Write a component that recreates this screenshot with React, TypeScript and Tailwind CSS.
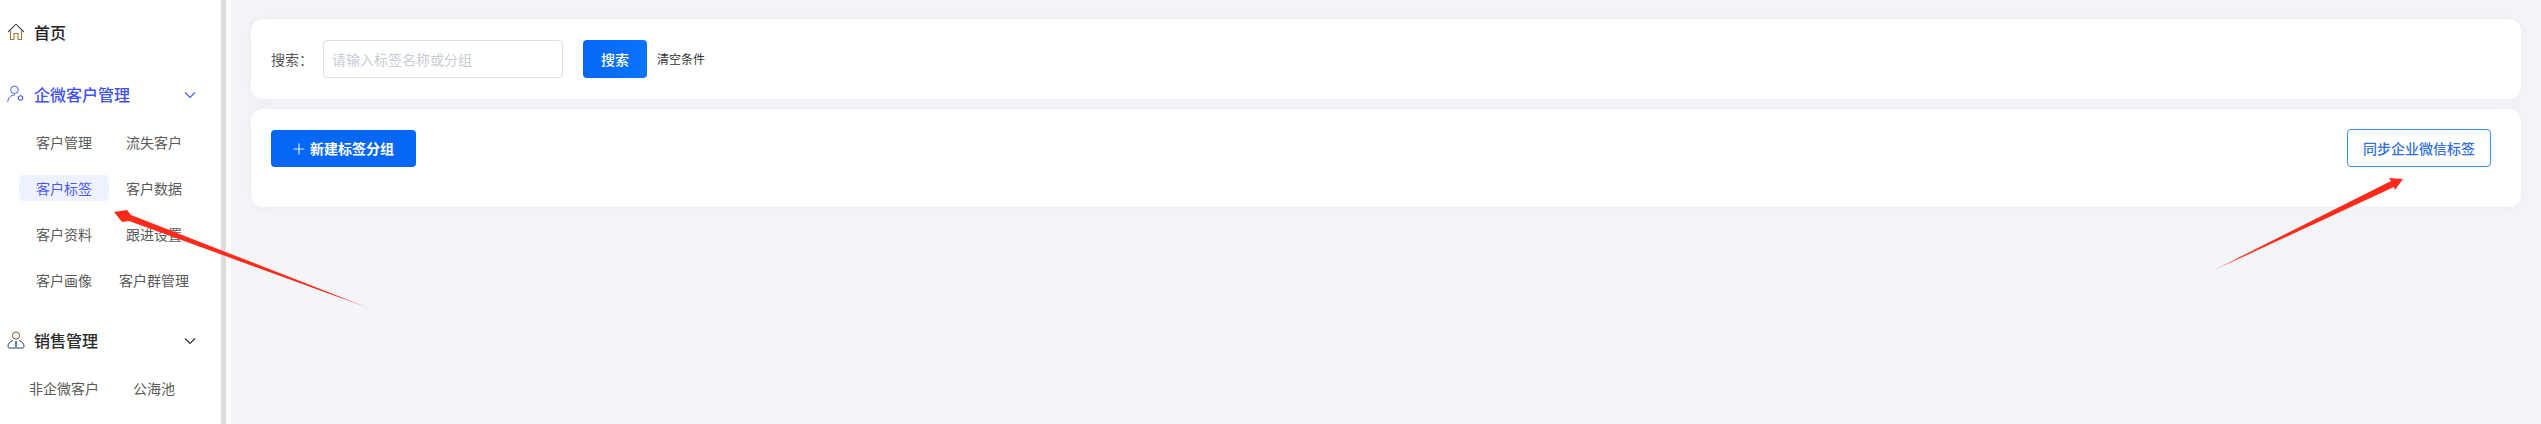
const font = { fontFamily: '"Noto Sans CJK SC", "Noto Sans", sans-serif' };

function HomeIcon() {
  return (
    <svg width="18" height="18" viewBox="0 0 18 18" fill="none" strokeWidth="1.1">
      <path d="M1 9 L9 1.2 L17 9" stroke="#3a4a66" />
      <path d="M3.5 7 V16.5 H7 V10.5 H11 V16.5 H14.5 V7" stroke="#a2773c" />
    </svg>
  );
}
function UserGearIcon() {
  return (
    <svg width="18" height="18" viewBox="0 0 18 18" fill="none" stroke="#4a5cf0" strokeWidth="1">
      <circle cx="7.5" cy="4.8" r="3.8" />
      <path d="M0.8 17 C1 12.5 3.8 10 8 10" />
      <path d="M13.5 10.6 L15.6 11.8 V14.2 L13.5 15.4 L11.4 14.2 V11.8 Z" strokeWidth="1.2" />
    </svg>
  );
}
function SalesIcon() {
  return (
    <svg width="18" height="18" viewBox="0 0 18 18" fill="none" stroke="#2c3a55" strokeWidth="1">
      <circle cx="9" cy="4.6" r="3.6" stroke="#7a5a3a" />
      <path d="M6 9.5 C2.5 10.5 1 13 1 15.2 C1 16.6 2 17 3 17 H15 C16 17 17 16.6 17 15.2 C17 13 15.5 10.5 12 9.5" />
      <path d="M9 10 L10 14 L9 16 L8 14 Z" stroke="#2a66b8" />
    </svg>
  );
}
function Chevron({ color }: { color: string }) {
  return (
    <svg width="12" height="8" viewBox="0 0 12 8" fill="none" stroke={color} strokeWidth="1.2">
      <path d="M1 1.5 L6 6.5 L11 1.5" />
    </svg>
  );
}

function SubGrid({ items, active }: { items: string[]; active?: string }) {
  return (
    <div className="grid grid-cols-[90px_90px] gap-y-[20px] pl-[19px]">
      {items.map((t) => (
        <div
          key={t}
          className={`flex h-[26px] items-center justify-center rounded-[4px] text-[14px] ${
            t === active ? "bg-[#eef1fe] text-[#4a5cf0]" : "text-[#5a5a5a]"
          }`}
        >
          {t}
        </div>
      ))}
    </div>
  );
}

function MenuHead({
  icon,
  label,
  color,
  chevron,
}: {
  icon: React.ReactNode;
  label: string;
  color: string;
  chevron?: string;
}) {
  return (
    <div className="flex h-[24px] items-center pl-[7px] pr-[25px]">
      <span className="flex w-[27px] shrink-0">{icon}</span>
      <span className="flex-1 text-[16px] font-medium" style={{ color }}>
        {label}
      </span>
      {chevron && (
        <span className="flex pt-[2px]">
          <Chevron color={chevron} />
        </span>
      )}
    </div>
  );
}

export default function App() {
  return (
    <div className="relative flex h-[424px] w-[2541px] overflow-hidden bg-white" style={font}>
      <aside className="flex w-[221px] shrink-0 flex-col bg-white pt-[20px]">
        <MenuHead icon={<HomeIcon />} label="首页" color="#222222" />
        <div className="mt-[38px]">
          <MenuHead icon={<UserGearIcon />} label="企微客户管理" color="#3f51ef" chevron="#4a5cf0" />
        </div>
        <div className="mt-[23px]">
          <SubGrid
            items={["客户管理", "流失客户", "客户标签", "客户数据", "客户资料", "跟进设置", "客户画像", "客户群管理"]}
            active="客户标签"
          />
        </div>
        <div className="mt-[35px]">
          <MenuHead icon={<SalesIcon />} label="销售管理" color="#2b2b2b" chevron="#333333" />
        </div>
        <div className="mt-[23px]">
          <SubGrid items={["非企微客户", "公海池"]} />
        </div>
      </aside>
      <div className="w-[5px] shrink-0 bg-[#dcdcdc]" />
      <div className="w-[5px] shrink-0 bg-white" />
      <main className="flex flex-1 flex-col gap-[10px] bg-[#f4f5f9] px-[20px] pt-[19px]">
        <section className="flex h-[80px] items-center rounded-[12px] bg-white pl-[20px] shadow-[0_0_10px_rgba(225,228,236,0.5)]">
          <span className="w-[52px] text-[14px] text-[#555555]">搜索：</span>
          <input
            readOnly
            placeholder="请输入标签名称或分组"
            className="h-[38px] w-[240px] rounded-[4px] border border-[#dcdfe6] bg-white px-[8px] text-[14px] outline-none placeholder:text-[#c8ccd4]"
          />
          <button className="ml-[20px] h-[38px] w-[64px] rounded-[4px] bg-gradient-to-r from-[#0667f6] to-[#0a74ff] text-[14px] font-medium text-white">
            搜索
          </button>
          <span className="ml-[10px] text-[12px] text-[#333333]">清空条件</span>
        </section>
        <section className="flex h-[98px] items-start justify-between rounded-[12px] bg-white pl-[20px] pr-[30px] pt-[20px] shadow-[0_0_10px_rgba(225,228,236,0.5)]">
          <button className="mt-[1px] flex h-[37px] w-[145px] items-center justify-center gap-[5px] rounded-[4px] bg-[#0667f6] text-[14px] font-bold text-white">
            <svg width="12" height="12" viewBox="0 0 12 12" stroke="#dbe8ff" strokeWidth="1.2">
              <path d="M6 0.5 V11.5 M0.5 6 H11.5" />
            </svg>
            新建标签分组
          </button>
          <button className="h-[38px] w-[144px] rounded-[4px] border border-[#3a8ef0] bg-white text-[14px] font-medium text-[#2f6fe0]">
            同步企业微信标签
          </button>
        </section>
      </main>
      <svg className="pointer-events-none absolute left-0 top-0" width="2541" height="424">
        <defs>
          <linearGradient id="fadeA" gradientUnits="userSpaceOnUse" x1="374" y1="310" x2="335" y2="295">
            <stop offset="0" stopColor="#ff2a1a" stopOpacity="0.15" />
            <stop offset="1" stopColor="#ff2a1a" />
          </linearGradient>
          <linearGradient id="fadeB" gradientUnits="userSpaceOnUse" x1="2208" y1="273" x2="2240" y2="257">
            <stop offset="0" stopColor="#ff2a1a" stopOpacity="0.15" />
            <stop offset="1" stopColor="#ff2a1a" />
          </linearGradient>
        </defs>
        <path d="M374 310 L131 215 L127 210 L114 212 L122 222 L129 221 Z" fill="url(#fadeA)" />
        <path d="M2208 273 L2391 181 L2389 178 L2403 179 L2395 190 L2394 187 Z" fill="url(#fadeB)" />
      </svg>
    </div>
  );
}
